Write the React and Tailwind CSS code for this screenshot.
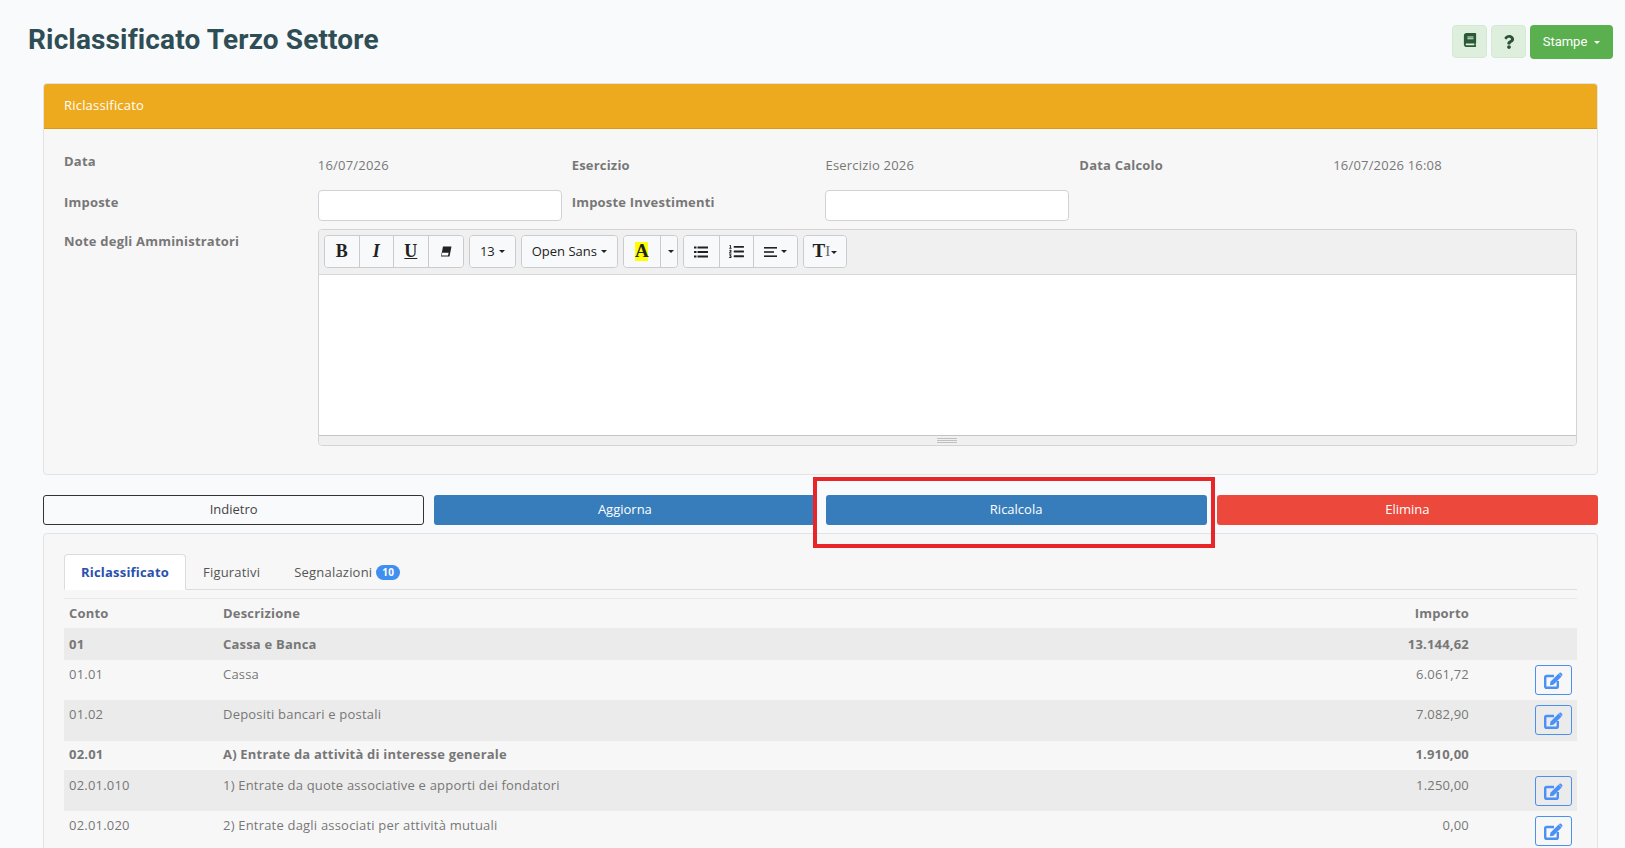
import React from "react";
import { FaBook, FaQuestion, FaListOl } from "react-icons/fa";

const rows = [
  { conto: "01", descrizione: "Cassa e Banca", importo: "13.144,62", bold: true, shade: true, height: "h-[32px]" },
  { conto: "01.01", descrizione: "Cassa", importo: "6.061,72", height: "h-[40px] pt-[5px]" },
  { conto: "01.02", descrizione: "Depositi bancari e postali", importo: "7.082,90", shade: true, height: "h-[41px] pt-[5px]" },
  { conto: "02.01", descrizione: "A) Entrate da attività di interesse generale", importo: "1.910,00", bold: true, height: "h-[29px] pb-[3px]" },
  { conto: "02.01.010", descrizione: "1) Entrate da quote associative e apporti dei fondatori", importo: "1.250,00", shade: true, height: "h-[41px] pt-[6px]" },
  { conto: "02.01.020", descrizione: "2) Entrate dagli associati per attività mutuali", importo: "0,00", height: "h-[40px] pt-[5px]" },
];

function Caret() {
  return <span className="ml-[4px] inline-block w-0 h-0 border-x-[3px] border-x-transparent border-t-[3px] border-t-[#222]" />;
}

function EditIcon() {
  return (
    <svg width="19" height="17" viewBox="0 0 19 17">
      <path d="M10 4H2.8C2 4 1.2 4.8 1.2 5.6v8.6c0 .8.8 1.6 1.6 1.6h9.4c.8 0 1.6-.8 1.6-1.6V9" fill="none" stroke="currentColor" strokeWidth="2.4" />
      <path d="M14.6 1.6l3 3L9.4 12.8l-3.4.5.4-3.5z" fill="currentColor" />
      <path d="M15.6.8c.4-.4 1-.4 1.4 0l1.2 1.2c.4.4.4 1 0 1.4l-.6.6-2.6-2.6z" fill="currentColor" />
    </svg>
  );
}

function EraserIcon() {
  return (
    <svg width="12" height="11" viewBox="0 0 12 11">
      <path d="M3 .5h8.5L9.5 10.5H1z" fill="#222" />
      <path d="M2.2 6.8h6.4l-.6 2.7H1.7z" fill="#fff" />
    </svg>
  );
}

function BulletsIcon() {
  return (
    <svg width="14" height="12" viewBox="0 0 14 12" fill="#222">
      <rect x="0" y="0.5" width="2.5" height="2" />
      <rect x="0" y="5" width="2.5" height="2" />
      <rect x="0" y="9.5" width="2.5" height="2" />
      <rect x="3.5" y="0.5" width="10.5" height="2" />
      <rect x="3.5" y="5" width="10.5" height="2" />
      <rect x="3.5" y="9.5" width="10.5" height="2" />
    </svg>
  );
}

function AlignIcon() {
  return (
    <svg width="13" height="10" viewBox="0 0 13 10" fill="#222">
      <rect x="0" y="0" width="13" height="1.6" />
      <rect x="0" y="4.2" width="10" height="1.6" />
      <rect x="0" y="8.4" width="13" height="1.6" />
    </svg>
  );
}

function ToolButton({ children, className = "" }) {
  return (
    <div className={`h-[31px] flex items-center justify-center bg-[#f8f9fa] text-[#222] ${className}`}>
      {children}
    </div>
  );
}

function Toolbar() {
  const groupClass = "flex border border-[#c9cbce] rounded-[4px] overflow-hidden divide-x divide-[#c9cbce]";
  return (
    <div className="h-[38px] min-h-[38px] box-content pb-[6px] bg-[#f0f0f0] border-b border-[#d8d8d8] rounded-t-[4px] flex items-end gap-[5px] pl-[5px] tracking-normal">
      <div className={groupClass}>
        <ToolButton className="w-[35px] font-['Liberation_Serif'] font-bold text-[18px]">B</ToolButton>
        <ToolButton className="w-[34px] font-['Liberation_Serif'] font-bold italic text-[18px]">I</ToolButton>
        <ToolButton className="w-[35px] font-['Liberation_Serif'] font-bold underline text-[18px]">U</ToolButton>
        <ToolButton className="w-[34px]"><EraserIcon /></ToolButton>
      </div>
      <div className={groupClass}>
        <ToolButton className="w-[45px] text-[13px]">13<Caret /></ToolButton>
      </div>
      <div className={groupClass}>
        <ToolButton className="w-[95px] text-[13px]">Open Sans<Caret /></ToolButton>
      </div>
      <div className={groupClass}>
        <ToolButton className="w-[37px]">
          <span className="bg-[#ffff00] w-[13px] h-[19px] flex items-center justify-center font-['Liberation_Serif'] font-bold text-[19px]">A</span>
        </ToolButton>
        <ToolButton className="w-[16px]"><Caret /></ToolButton>
      </div>
      <div className={groupClass}>
        <ToolButton className="w-[36px]"><BulletsIcon /></ToolButton>
        <ToolButton className="w-[34px]"><FaListOl className="text-[15px]" /></ToolButton>
        <ToolButton className="w-[43px]"><AlignIcon /><Caret /></ToolButton>
      </div>
      <div className={groupClass}>
        <ToolButton className="w-[42px] font-['Liberation_Serif'] font-bold text-[19px]">
          T<span className="font-normal text-[15px] text-[#666]">I</span>
          <span className="-mt-[6px] -ml-[3px]"><Caret /></span>
        </ToolButton>
      </div>
    </div>
  );
}

function Editor() {
  return (
    <div className="col-span-5 h-[217px] border border-[#d4d4d4] rounded-[4px] flex flex-col bg-white">
      <Toolbar />
      <div className="flex-1" />
      <div className="h-[10px] bg-[#f0f0f0] border-t border-[#c4c4c4] rounded-b-[4px] flex flex-col items-center justify-center gap-[1px]">
        <div className="w-[20px] h-px bg-[#c0c0c0]" />
        <div className="w-[20px] h-px bg-[#c0c0c0]" />
        <div className="w-[20px] h-px bg-[#c0c0c0]" />
      </div>
    </div>
  );
}

export default function App() {
  return (
    <div className="relative h-[848px] overflow-hidden bg-[#f9fafc] font-['Open_Sans',sans-serif] text-[13px] tracking-[0.2px] text-[#777]">
      {/* Page header */}
      <div className="flex items-start justify-between h-[83px] pl-[28px] pr-[12px] pt-[25px]">
        <h1 className="font-['Roboto',sans-serif] font-bold text-[28px] tracking-[0.14px] leading-[29px] text-[#2f4d54]">
          Riclassificato Terzo Settore
        </h1>
        <div className="flex gap-[4px] tracking-normal">
          <div className="w-[35px] h-[33px] pb-[4px] rounded-[4px] bg-[#def0dd] border border-[#d3ead2] flex items-center justify-center text-[#2d5a36]">
            <FaBook className="text-[14px]" />
          </div>
          <div className="w-[35px] h-[33px] rounded-[4px] bg-[#def0dd] border border-[#d3ead2] flex items-center justify-center text-[#2d5038]">
            <FaQuestion className="text-[14px]" />
          </div>
          <div className="w-[83px] h-[34px] rounded-[4px] bg-[#5ab04f] flex items-center justify-center font-['Roboto',sans-serif] text-[13px] text-white">
            Stampe
            <span className="ml-[7px] w-0 h-0 border-x-[3px] border-x-transparent border-t-[3px] border-t-white" />
          </div>
        </div>
      </div>

      <div className="pl-[43px] pr-[27px]">
        {/* Form card */}
        <div className="h-[392px] border border-[#e3e3e3] rounded-[4px] bg-[#f7f7f7] overflow-hidden">
          <div className="h-[45px] bg-[#eeaa1e] border-b border-[#d99a17] flex items-center pl-[20px] text-white">
            Riclassificato
          </div>
          <div className="grid grid-cols-6 gap-x-[10px] px-[20px] pt-[23px]">
            <div className="font-bold leading-[18px] h-[38px]">Data</div>
            <div className="pt-[4px] leading-[18px]">16/07/2026</div>
            <div className="pt-[4px] font-bold leading-[18px]">Esercizio</div>
            <div className="pt-[4px] leading-[18px]">Esercizio 2026</div>
            <div className="pt-[4px] font-bold leading-[18px]">Data Calcolo</div>
            <div className="pt-[4px] leading-[18px]">16/07/2026 16:08</div>

            <div className="font-bold leading-[18px] pt-[3px] h-[39px]">Imposte</div>
            <div className="h-[31px] bg-white border border-[#cfd2d6] rounded-[4px]" />
            <div className="font-bold leading-[18px] pt-[3px]">Imposte Investimenti</div>
            <div className="h-[31px] bg-white border border-[#cfd2d6] rounded-[4px]" />
            <div className="col-span-2" />

            <div className="font-bold leading-[18px] pt-[3px]">Note degli Amministratori</div>
            <Editor />
          </div>
        </div>

        {/* Actions */}
        <div className="grid grid-cols-4 gap-x-[10px] mt-[20px] h-[30px] text-white tracking-normal">
          <div className="border border-[#333] rounded-[3px] flex items-center justify-center text-[#444]">Indietro</div>
          <div className="bg-[#377dbb] rounded-[3px] flex items-center justify-center">Aggiorna</div>
          <div className="bg-[#377dbb] rounded-[3px] flex items-center justify-center">Ricalcola</div>
          <div className="bg-[#ec483b] rounded-[3px] flex items-center justify-center">Elimina</div>
        </div>

        {/* Tabs and table */}
        <div className="mt-[8px] h-[400px] border border-[#e3e3e3] rounded-[4px] bg-[#f7f7f7] px-[20px] pt-[20px]">
          <div className="flex h-[36px] border-b border-[#dcdcdc] items-end">
            <div className="h-[36px] pt-[2px] -mb-px w-[122px] bg-white border border-[#dcdcdc] border-b-white rounded-t-[4px] flex items-center justify-center font-bold text-[#2a50ad]">
              Riclassificato
            </div>
            <div className="h-[36px] pt-[3px] pl-[17px] pr-[17px] flex items-center text-[#555]">Figurativi</div>
            <div className="h-[36px] pt-[3px] pl-[17px] flex items-center text-[#555]">
              Segnalazioni
              <span className="ml-[4px] h-[15px] px-[6px] rounded-full bg-[#3f8ff0] text-white text-[10px] font-bold leading-[15px]">10</span>
            </div>
          </div>
          <div className="mt-[8px] border-t border-[#e8e8e8]">
            <div className="flex h-[29px] items-center font-bold">
              <div className="w-[159px] pl-[5px]">Conto</div>
              <div className="flex-1">Descrizione</div>
              <div className="w-[120px] text-right">Importo</div>
              <div className="w-[108px]" />
            </div>
            {rows.map((r) => (
              <div
                key={r.conto}
                className={`flex ${r.height} ${r.bold ? "font-bold items-center" : "items-start"} ${r.shade ? "bg-[#ebebeb]" : ""}`}
              >
                <div className="w-[159px] pl-[5px] leading-[18px]">{r.conto}</div>
                <div className="flex-1 leading-[18px]">{r.descrizione}</div>
                <div className="w-[120px] text-right leading-[18px]">{r.importo}</div>
                <div className="w-[108px] flex justify-end pr-[5px]">
                  {!r.bold && (
                    <div className="w-[37px] h-[30px] border border-[#4a90f0] rounded-[3px] flex items-center justify-center text-[#4a90f5]">
                      <EditIcon />
                    </div>
                  )}
                </div>
              </div>
            ))}
          </div>
        </div>
      </div>

      {/* Red annotation box */}
      <div className="absolute left-[813px] top-[477px] w-[402px] h-[71px] border-[4px] border-[#e8262a]" />
    </div>
  );
}
